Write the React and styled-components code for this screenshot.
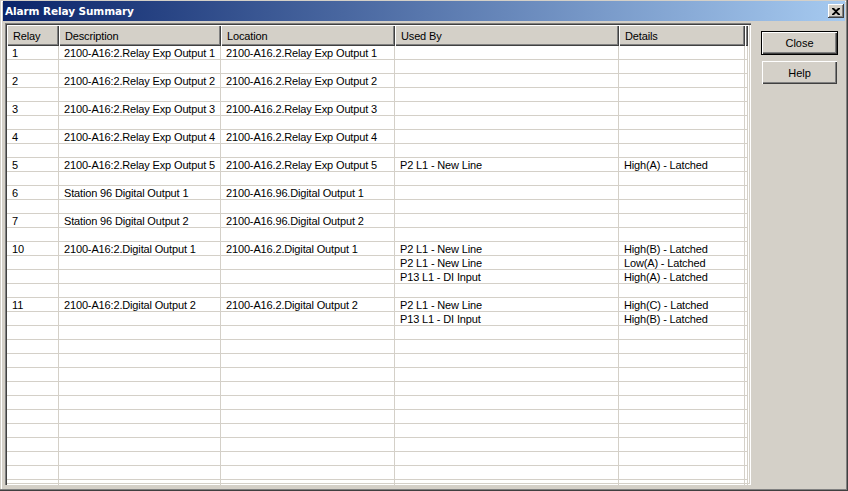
import styled, { createGlobalStyle } from 'styled-components';

const GlobalStyle = createGlobalStyle`
  html, body {
    margin: 0;
    padding: 0;
    background: #d4d0c8;
  }
  body {
    font-family: "Liberation Sans", Arial, sans-serif;
    font-size: 11px;
  }
`;

const COLUMNS = [
  { title: 'Relay', width: 52 },
  { title: 'Description', width: 162 },
  { title: 'Location', width: 174 },
  { title: 'Used By', width: 224 },
  { title: 'Details', width: 126 },
];

const DATA = [
  ['1', '2100-A16:2.Relay Exp Output 1', '2100-A16.2.Relay Exp Output 1', '', ''],
  [],
  ['2', '2100-A16:2.Relay Exp Output 2', '2100-A16.2.Relay Exp Output 2', '', ''],
  [],
  ['3', '2100-A16:2.Relay Exp Output 3', '2100-A16.2.Relay Exp Output 3', '', ''],
  [],
  ['4', '2100-A16:2.Relay Exp Output 4', '2100-A16.2.Relay Exp Output 4', '', ''],
  [],
  ['5', '2100-A16:2.Relay Exp Output 5', '2100-A16.2.Relay Exp Output 5', 'P2 L1 - New Line', 'High(A) - Latched'],
  [],
  ['6', 'Station 96 Digital Output 1', '2100-A16.96.Digital Output 1', '', ''],
  [],
  ['7', 'Station 96 Digital Output 2', '2100-A16.96.Digital Output 2', '', ''],
  [],
  ['10', '2100-A16:2.Digital Output 1', '2100-A16.2.Digital Output 1', 'P2 L1 - New Line', 'High(B) - Latched'],
  ['', '', '', 'P2 L1 - New Line', 'Low(A) - Latched'],
  ['', '', '', 'P13 L1 - DI Input', 'High(A) - Latched'],
  [],
  ['11', '2100-A16:2.Digital Output 2', '2100-A16.2.Digital Output 2', 'P2 L1 - New Line', 'High(C) - Latched'],
  ['', '', '', 'P13 L1 - DI Input', 'High(B) - Latched'],
];

const TOTAL_ROWS = 32;

export default function App() {
  const rows = Array.from({ length: TOTAL_ROWS }, (_, i) => DATA[i] || []);

  return (
    <>
      <GlobalStyle />
      <Window>
        <TitleBar>
          <TitleText>Alarm Relay Summary</TitleText>
          <CloseBox aria-label="Close">
            <svg width="8" height="7" viewBox="0 0 8 7">
              <path d="M0 0h2l2 2 2-2h2v1L5 3.5 8 6v1H6L4 5 2 7H0V6l3-2.5L0 1z" fill="#000" />
            </svg>
          </CloseBox>
        </TitleBar>
        <Body>
          <ListFrame>
            <Table>
              <colgroup>
                {COLUMNS.map((c) => (
                  <col key={c.title} style={{ width: c.width }} />
                ))}
                <col style={{ width: 3 }} />
                <col />
              </colgroup>
              <thead>
                <tr>
                  {COLUMNS.map((c) => (
                    <HeadCell key={c.title}>{c.title}</HeadCell>
                  ))}
                  <HeadCell $filler />
                  <BlankHead />
                </tr>
              </thead>
              <tbody>
                {rows.map((r, i) => (
                  <tr key={i}>
                    {COLUMNS.map((c, j) => (
                      <Cell key={c.title}>{r[j] || ''}</Cell>
                    ))}
                    <Cell $filler />
                    <BlankCell />
                  </tr>
                ))}
              </tbody>
            </Table>
          </ListFrame>
          <ButtonColumn>
            <Button $default>Close</Button>
            <Button>Help</Button>
          </ButtonColumn>
        </Body>
      </Window>
    </>
  );
}

const Window = styled.div`
  width: 848px;
  height: 491px;
  box-sizing: border-box;
  padding: 1px 3px 3px 3px;
  background: #d4d0c8;
  box-shadow: inset -1px -1px #404040, inset -2px -2px #808080, inset 1px 1px #d4d0c8, inset 2px 2px #ffffff;
  display: flex;
  flex-direction: column;
  overflow: hidden;
`;

const TitleBar = styled.div`
  height: 20px;
  flex: none;
  display: flex;
  align-items: center;
  justify-content: space-between;
  padding: 0 1px 0 2px;
  background: linear-gradient(to right, #0a246a, #a6caf0);
`;

const TitleText = styled.span`
  color: #ffffff;
  font-family: "DejaVu Sans", Verdana, sans-serif;
  font-weight: bold;
  font-size: 10.5px;
  letter-spacing: -0.1px;
`;

const CloseBox = styled.div`
  width: 16px;
  height: 14px;
  box-sizing: border-box;
  background: #d4d0c8;
  box-shadow: inset -1px -1px #404040, inset 1px 1px #ffffff, inset -2px -2px #808080;
  display: flex;
  align-items: center;
  justify-content: center;
`;

const Body = styled.div`
  flex: 1;
  display: flex;
  padding: 2px 2px 3px 2px;
  min-height: 0;
`;

const ListFrame = styled.div`
  width: 746px;
  height: 462px;
  box-sizing: border-box;
  padding: 2px;
  background: #ffffff;
  box-shadow: inset 1px 1px #808080, inset 2px 2px #404040, inset -1px -1px #ffffff, inset -2px -2px #d4d0c8;
  overflow: hidden;
  flex: none;
`;

const Table = styled.table`
  width: 742px;
  table-layout: fixed;
  border-collapse: separate;
  border-spacing: 0;
  font-family: "Liberation Sans", Arial, sans-serif;
  font-size: 11px;
  letter-spacing: -0.15px;
  color: #000000;
`;

const HeadCell = styled.th`
  height: 21px;
  box-sizing: border-box;
  padding: 1px 0 0 ${(p) => (p.$filler ? 0 : 6)}px;
  text-align: left;
  font-weight: normal;
  background: #d4d0c8;
  box-shadow: inset 1px 1px #ffffff, inset -1px -1px #404040, inset -2px -2px #808080;
  white-space: nowrap;
  overflow: hidden;
`;

const BlankHead = styled.th`
  height: 21px;
  padding: 0;
  background: #d4d0c8;
  box-shadow: inset 1px 1px #ffffff;
`;

const Cell = styled.td`
  height: 14px;
  box-sizing: border-box;
  padding: 1px 0 0 ${(p) => (p.$filler ? 0 : 5)}px;
  line-height: 12px;
  border-right: 1px solid #d4d0c8;
  border-bottom: 1px solid #d4d0c8;
  white-space: nowrap;
  overflow: hidden;
`;

const BlankCell = styled.td`
  padding: 0;
  height: 14px;
`;

const ButtonColumn = styled.div`
  display: flex;
  flex-direction: column;
  align-items: flex-start;
  gap: 6px;
  margin-left: 10px;
  padding-top: 8px;
`;

const Button = styled.button`
  width: ${(p) => (p.$default ? 77 : 75)}px;
  height: ${(p) => (p.$default ? 24 : 23)}px;
  margin-left: ${(p) => (p.$default ? 0 : 1)}px;
  box-sizing: border-box;
  padding: 0;
  background: #d4d0c8;
  font-family: "Liberation Sans", Arial, sans-serif;
  font-size: 11px;
  color: #000000;
  border: ${(p) => (p.$default ? '1px solid #000000' : 'none')};
  box-shadow: inset 1px 1px #ffffff, inset -1px -1px #404040, inset -2px -2px #808080;
  cursor: default;
`;
